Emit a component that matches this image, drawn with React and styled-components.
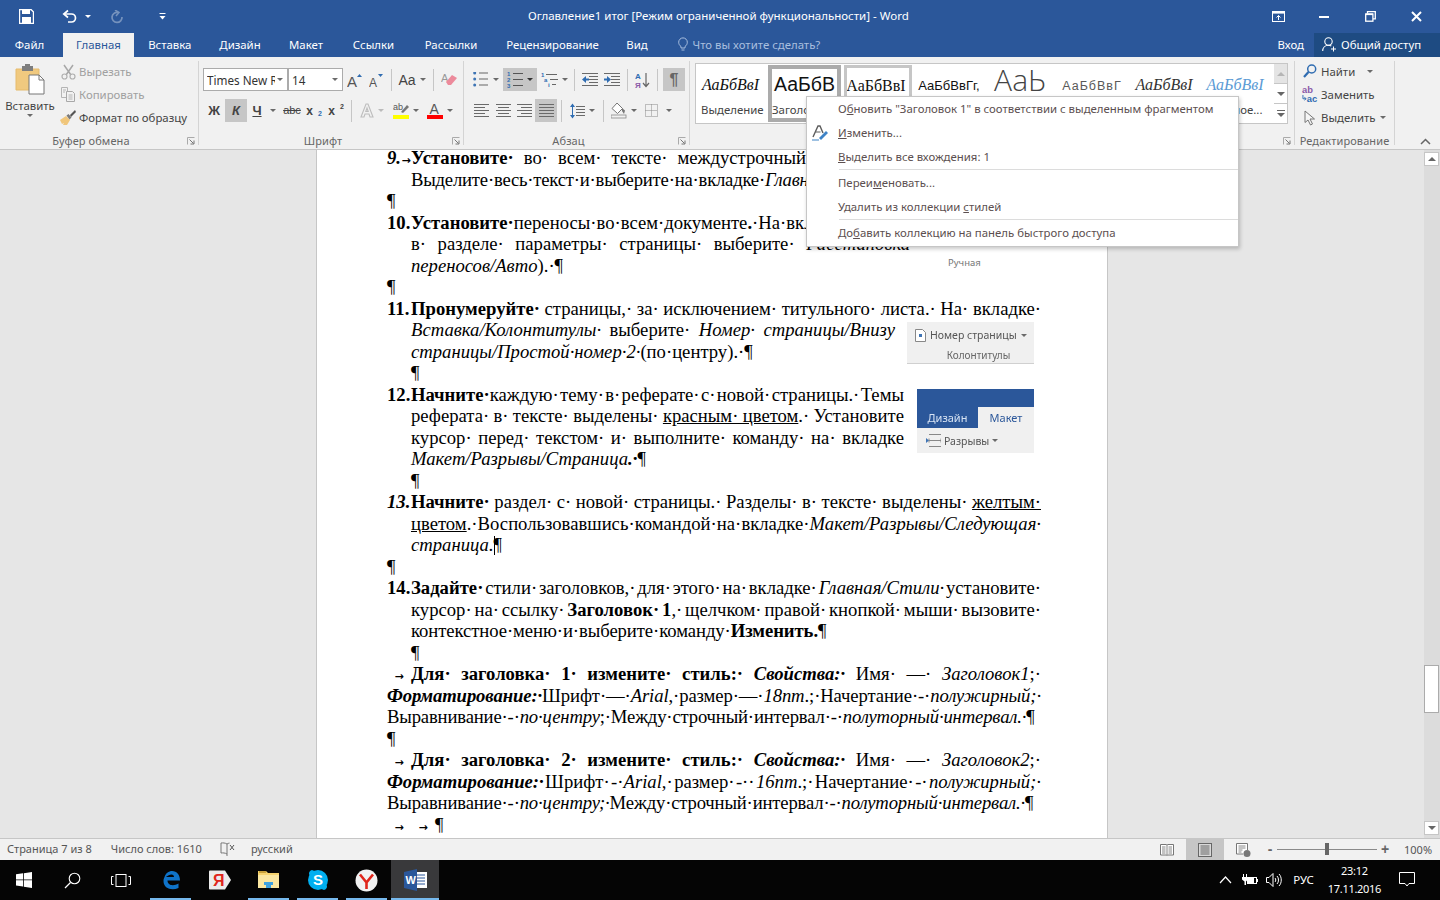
import React from 'react';
import styled, { createGlobalStyle } from 'styled-components';

const ui = `"Noto Sans","Open Sans",sans-serif`;
const serif = `"Liberation Serif","Times New Roman",serif`;

const Global = createGlobalStyle`
  html, body { margin: 0; padding: 0; height: 900px; overflow: hidden; background: #e6e6e6; }
  #root { height: 900px; }
  * { box-sizing: border-box; }
`;

const Shell = styled.div`
  position: relative; width: 1440px; height: 900px; overflow: hidden;
  display: flex; flex-direction: column; font-family: ${ui}; font-size: 11.4px; color: #444;
`;

/* ---------- title bar ---------- */
const TitleBar = styled.div`
  height: 33px; flex: none; background: #2b579a; color: #fff; display: flex; align-items: center;
`;
const Quick = styled.div`
  width: 1255px; height: 33px; flex: none; display: flex; align-items: center; padding-left: 19px; position: relative;
`;
const QuickBtn = styled.div`
  display: flex; align-items: center; width: ${p => p.$w}px; opacity: ${p => p.$dim ? .35 : 1};
`;
const TitleText = styled.div`
  position: absolute; left: 528px; top: 8px; line-height: 16px; white-space: nowrap; font-size: 11.5px; color: #fff;
`;
const WinBtns = styled.div`
  display: flex; align-items: center; flex: 1;
`;
const WinBtn = styled.div`
  width: 46px; height: 33px; display: flex; align-items: center; justify-content: center;
`;
const WhiteCaret = styled.span`
  display: inline-block; width: 0; height: 0; border: 3px solid transparent; border-top: 3px solid #fff; border-bottom: 0;
`;

/* ---------- tabs ---------- */
const TabBar = styled.div`
  height: 24px; flex: none; background: #2b579a; display: flex; align-items: stretch; color: #fff;
`;
const Tab = styled.div`
  width: ${p => p.$w}px; flex: none; padding-bottom: 2px; display: flex; align-items: center; justify-content: center; white-space: nowrap;
  ${p => p.$active && `background:#f1f1f1;color:#2b579a;`}
  ${p => p.$file && `margin-right:4px;`}
`;
const Tell = styled.div`
  display: flex; align-items: center; gap: 5px; margin-left: 16px; padding-bottom: 2px; color: #a9bfdf; flex: 1;
`;
const SignIn = styled.div`
  display: flex; align-items: center; padding: 0 10px 2px 0;
`;
const Share = styled.div`
  width: 126px; background: #1e4b82; display: flex; align-items: center; gap: 4px; padding: 0 0 2px 8px;
`;

/* ---------- ribbon ---------- */
const Ribbon = styled.div`
  height: 93px; flex: none; background: #f1f1f1; border-bottom: 1px solid #c6c6c6; display: flex; padding: 4px 0; position: relative;
`;
const Group = styled.div`
  width: ${p => p.$w}px; flex: none; display: flex; flex-direction: column; position: relative;
  border-right: 1px solid #d4d4d4;
`;
const GroupBody = styled.div`
  flex: 1; display: flex; min-height: 0;
`;
const GroupLabel = styled.div`
  height: 16px; flex: none; text-align: center; line-height: 16px; color: #666; font-size: 11px; letter-spacing: .1px; white-space: nowrap;
  padding-right: ${p => p.$pr || 0}px; margin-bottom: -4px;
`;
const Launcher = styled.div`
  position: absolute; right: 3px; bottom: 0; width: 8px; height: 8px; line-height: 0;
`;
const PasteBtn = styled.div`
  width: 60px; flex: none; display: flex; flex-direction: column; align-items: center; padding-top: 3px;
`;
const PasteLabel = styled.div`
  margin-top: 3px; line-height: 16px; color: #444;
`;
const CmdList = styled.div`
  flex: 1; display: flex; flex-direction: column; margin-top: -1px; padding-left: ${p => p.$l || 0}px;
`;
const Cmd = styled.div`
  height: 23px; display: flex; align-items: center; gap: 3px; white-space: nowrap;
  color: ${p => p.$off ? '#a0a0a0' : '#444'};
`;
const CmdIcon = styled.div`
  width: 16px; height: 16px; flex: none; display: flex; align-items: center; justify-content: center;
`;
const CmdCaret = styled.span`
  margin-left: ${p => p.$l}px; display: flex;
`;
const Rows = styled.div`
  display: flex; flex-direction: column; gap: 8px; padding: 7px 0 0 ${p => p.$l || 0}px;
`;
const Row = styled.div`
  height: 23px; display: flex; align-items: center; padding-left: ${p => p.$l || 0}px;
`;
const Combo = styled.div`
  width: ${p => p.$w}px; height: 23px; background: #fff; border: 1px solid #ababab;
  display: flex; align-items: center; justify-content: space-between; padding: 0 4px 0 3px; color: #333; font-size: 11.7px; white-space: nowrap; overflow: hidden;
`;
const ComboText = styled.span`
  overflow: hidden; width: ${p => p.$w}px;
`;
const Btn = styled.div`
  width: ${p => p.$w || 22}px; height: 23px; flex: none; display: flex; align-items: center;
  justify-content: ${p => p.$start ? 'flex-start' : 'center'}; padding-left: ${p => p.$start || 0}px; gap: ${p => p.$gap || 4}px;
  margin-left: ${p => p.$ml || 0}px; color: #444;
  background: ${p => p.$on ? '#c6c6c6' : 'transparent'};
`;
const Letter = styled.span`
  font-family: "Liberation Sans", sans-serif; font-weight: ${p => p.$bold ? 700 : 400}; font-style: ${p => p.$it ? 'italic' : 'normal'};
  font-size: ${p => p.$size || 13}px; line-height: 1; color: ${p => p.$c || '#444'};
  text-decoration: ${p => p.$under ? 'underline' : p.$strike ? 'line-through' : 'none'};
`;
const Sup = styled.span`
  font-size: 7px; font-weight: 700; font-family: "Liberation Sans", sans-serif; color: ${p => p.$c || '#444'};
  position: relative; top: ${p => p.$t}px; margin-left: 1px;
`;
const Sep = styled.div`
  width: 1px; height: 22px; background: #c6c6c6; flex: none; margin-left: ${p => p.$l}px; margin-right: ${p => p.$r}px;
`;
const Caret = styled.span`
  display: inline-block; width: 0; height: 0; flex: none; border: 3px solid transparent; border-top: 3px solid ${p => p.$c || '#6a6a6a'}; border-bottom: 0;
`;
const Gallery = styled.div`
  margin: 2px 0 0 5px; width: 593px; height: 61px; display: flex; flex: none;
`;
const Cells = styled.div`
  width: 580px; height: 61px; background: #fff; border: 1px solid #c6c6c6; display: flex; padding: 1px 0 0 1px; overflow: hidden;
`;
const Cell = styled.div`
  width: ${p => p.$w}px; height: 57px; flex: none; margin-right: ${p => p.$mr || 0}px; overflow: hidden;
  border: ${p => p.$border || 0}px solid ${p => p.$bc || 'transparent'};
  display: flex; flex-direction: column; align-items: flex-start;
`;
const Preview = styled.div`
  height: ${p => p.$h || 37}px; flex: none; width: 100%; display: flex; align-items: flex-end; justify-content: center; white-space: nowrap; line-height: 1;
  padding: 0 ${p => p.$pr ?? 4}px ${p => p.$pb ?? 9}px 0;
  font-family: ${p => p.$serif ? serif : p.$light ? '"Open Sans","Noto Sans",sans-serif' : '"Liberation Sans",sans-serif'};
  font-size: ${p => p.$size}px; font-style: ${p => p.$it ? 'italic' : 'normal'}; font-weight: ${p => p.$light ? 300 : 400};
  color: ${p => p.$c || '#111'}; letter-spacing: ${p => p.$ls || 0}px;
`;
const CellLabel = styled.div`
  padding-left: ${p => p.$l ?? 4}px; line-height: 16px; color: #444; white-space: nowrap;
`;
const GalleryScroll = styled.div`
  width: 14px; height: 61px; border: 1px solid #c6c6c6; border-left: 0; display: flex; flex-direction: column; flex: none; background: #fff; margin-left: -1px;
`;
const ScrollCell = styled.div`
  flex: 1; display: flex; align-items: center; justify-content: center; position: relative;
  background: ${p => p.$off ? '#e4e4e4' : '#fff'};
  border-top: ${p => p.$top ? '1px solid #c6c6c6' : '0'};
`;
const UpTri = styled.span`
  width: 0; height: 0; border: 4px solid transparent; border-bottom: 4px solid #b5b5b5; border-top: 0;
`;
const Dash = styled.span`
  display: flex; flex-direction: column; align-items: center; gap: 2px;
  &::before { content: ""; width: 8px; height: 1px; background: #666; }
`;
const Collapse = styled.div`
  position: absolute; right: 9px; bottom: 4px; line-height: 0;
`;

/* ---------- document ---------- */
const Doc = styled.div`
  flex: 1; min-height: 0; display: flex; background: #e6e6e6;
`;
const Canvas = styled.div`
  flex: 1; padding-left: 316px; overflow: hidden;
`;
const Page = styled.div`
  position: relative; width: 792px; height: 100%; background: #fff; border-left: 1px solid #c6c6c6; border-right: 1px solid #c6c6c6;
  overflow: hidden; padding-left: 70px; font-family: ${serif}; font-size: 18.67px; color: #000;
`;
const Text = styled.div`
  margin-top: -2.8px;
`;
const Line = styled.div`
  height: 21.5px; line-height: 21.5px; white-space: nowrap;
  margin-left: ${p => p.$in ? 24 : 0}px;
  letter-spacing: ${p => p.$ls || 0}px;
  ${p => p.$end && `width:${p.$end - 387 - (p.$in ? 24 : 0)}px;text-align:justify;text-align-last:justify;word-spacing:-.25em;`}
`;
const B = styled.b`font-weight: 700;`;
const I = styled.i`font-style: italic;`;
const BI = styled.b`font-weight: 700; font-style: italic;`;
const U = styled.span`text-decoration: underline;`;
const Num = styled.span`
  display: inline-block; width: 24px; font-weight: 700; font-style: ${p => p.$it ? 'italic' : 'normal'}; text-align-last: left;
`;
const TabMark = styled.span`
  display: inline-block; width: ${p => p.$w || 24}px; text-align: center; font-size: 11px; font-weight: 700; font-family: "DejaVu Sans", sans-serif; text-align-last: center;
`;
const Cursor = styled.span`
  display: inline-block; width: 1px; height: 19px; background: #000; vertical-align: -4px; margin-right: -1px;
`;
const Figure = styled.div`
  position: absolute; left: ${p => p.$x - 317}px; top: ${p => p.$y - 150}px; width: ${p => p.$w}px; height: ${p => p.$h}px;
  font-family: ${ui}; filter: blur(.3px); background: ${p => p.$bg || 'transparent'};
`;
const FigureRow = styled.div`
  display: flex; align-items: center; gap: 4px; height: 26px; padding-left: ${p => p.$l}px; font-size: 10.5px; color: #555; white-space: nowrap;
`;
const FigureCaption = styled.div`
  text-align: center; font-size: 10px; color: #666; line-height: 14px; border-bottom: 1px solid #d0d0d0; height: 16px; padding-left: 16px;
`;
const MiniTabs = styled.div`
  height: 39px; background: #2b579a; display: flex; align-items: flex-end; font-size: 11px; color: #d7e3f3;
`;
const MiniTab = styled.div`
  height: 21px; display: flex; align-items: center; justify-content: center; width: ${p => p.$w}px;
  ${p => p.$on && 'background:#f0f0f0;color:#2b579a;'}
`;
const FigureBody = styled.div`
  height: 25px; background: #f0f0f0; display: flex; align-items: center; gap: 3px; padding-left: 9px; font-size: 10.5px; color: #555;
`;
const Manual = styled.div`
  position: absolute; left: ${948 - 317}px; top: ${256 - 150}px; font-family: ${ui}; font-size: 9.5px; line-height: 13px; color: #777;
`;
const VScroll = styled.div`
  width: 16px; flex: none; background: #dcdcdc; position: relative; padding: 2px 1px 3px 0; display: flex; flex-direction: column; justify-content: space-between; align-items: center;
`;
const VBtn = styled.div`
  width: 15px; height: 14px; background: #fff; border: 1px solid #c6c6c6; display: flex; align-items: center; justify-content: center;
`;
const VThumb = styled.div`
  position: absolute; left: 0; top: ${665 - 150}px; width: 15px; height: 48px; background: #fff; border: 1px solid #ababab;
`;
const DownTri = styled.span`
  width: 0; height: 0; border: 4px solid transparent; border-top: 4px solid #666; border-bottom: 0;
`;
const UpDark = styled.span`
  width: 0; height: 0; border: 4px solid transparent; border-bottom: 4px solid #666; border-top: 0;
`;

/* ---------- context menu ---------- */
const Menu = styled.div`
  position: absolute; left: 806px; top: 96px; width: 433px; height: 151px; background: #fff; border: 1px solid #c6c6c6;
  box-shadow: 1px 2px 4px rgba(0,0,0,.22); z-index: 5;
`;
const MenuItem = styled.div`
  height: 24px; line-height: 24px; padding-left: 31px; color: #5c4f50; position: relative; white-space: nowrap;
`;
const MenuIcon = styled.span`
  position: absolute; left: 5px; top: 4px; line-height: 0;
`;
const MenuSep = styled.div`
  height: 1px; margin: 0 0 1px 32px; background: #dcdcdc;
`;
const Acc = styled.span`text-decoration: underline;`;

/* ---------- status bar ---------- */
const Status = styled.div`
  height: 22px; flex: none; background: #f1f1f1; border-top: 1px solid #c6c6c6; display: flex; align-items: center; color: #555; font-size: 11px;
`;
const StatusItem = styled.div`
  margin-left: ${p => p.$l}px; padding-bottom: 2px; white-space: nowrap; display: flex; align-items: center;
`;
const StatusSpacer = styled.div`
  flex: 1;
`;
const ViewBtn = styled.div`
  width: ${p => p.$w}px; height: 21px; display: flex; align-items: center; justify-content: center; flex: none;
  background: ${p => p.$on ? '#c6c6c6' : 'transparent'};
`;
const ZoomMark = styled.div`
  width: 16px; text-align: center; flex: none;
`;
const Slider = styled.div`
  width: 100px; height: 1px; background: #8a8a8a; position: relative; flex: none; margin-left: -1px;
`;
const Thumb = styled.div`
  position: absolute; left: 48px; top: -6px; width: 4px; height: 12px; background: #666;
`;
const ZoomPct = styled.div`
  margin-left: 11px; width: 36px; padding-bottom: 1px;
`;

/* ---------- taskbar ---------- */
const Taskbar = styled.div`
  height: 40px; flex: none; background: #050505; display: flex; align-items: stretch; color: #fff;
`;
const TaskBtn = styled.div`
  width: ${p => p.$w || 49}px; flex: none; display: flex; align-items: center; justify-content: center; position: relative;
  background: ${p => p.$on ? '#39393b' : 'transparent'};
  ${p => p.$run && `&::after{content:"";position:absolute;bottom:0;left:${p.$on ? 0 : 4}px;right:${p.$on ? 0 : 4}px;height:2px;background:#76b9ed;}`}
`;
const Tray = styled.div`
  flex: 1; display: flex; align-items: center; justify-content: flex-end;
`;
const TrayItem = styled.div`
  margin-right: ${p => p.$r}px; display: flex; align-items: center; line-height: 0;
`;
const TrayText = styled.div`
  margin-right: ${p => p.$r}px; font-size: ${p => p.$size || 11.4}px; letter-spacing: ${p => p.$ls || 0}px; white-space: nowrap; text-align: center; line-height: 18px;
`;

/* ---------- icons ---------- */
const Lines = ({ x = 0, y = 0, w = 14, n = 4, step = 3, c = '#6a6a6a', alt }) => (
  <>
    {Array.from({ length: n }).map((_, i) => (
      <rect key={i} x={alt === 'r' && i % 2 ? x + 4 : alt === 'c' && i % 2 ? x + 2 : x} y={y + i * step}
        width={alt && i % 2 ? w - 4 : w} height="1" fill={c} />
    ))}
  </>
);
const Launch = () => (
  <svg width="8" height="8" viewBox="0 0 8 8"><path d="M.5 7.5V.5h7" fill="none" stroke="#aaa" /><path d="M2.5 2.5l4 4M7 3.5V7H3.5" fill="none" stroke="#777" /></svg>
);
const SaveIcon = () => (
  <svg width="15" height="15" viewBox="0 0 15 15"><path d="M.5.5h11.5l2.5 2.5v11.5H.5z" fill="none" stroke="#fff" strokeWidth="1.4" /><rect x="3" y="1" width="8" height="4" fill="#fff" /><rect x="3" y="8" width="9" height="6" fill="#fff" /></svg>
);
const UndoIcon = () => (
  <svg width="16" height="15" viewBox="0 0 16 15"><path d="M6 1.5L1.8 5 6 8.5" fill="none" stroke="#fff" strokeWidth="1.7" /><path d="M2 5h7.5a4 4 0 0 1 0 8H6" fill="none" stroke="#fff" strokeWidth="1.7" /></svg>
);
const RedoIcon = () => (
  <svg width="14" height="14" viewBox="0 0 14 14"><path d="M8 2.5A5 5 0 1 0 12 7" fill="none" stroke="#fff" strokeWidth="1.7" /><path d="M5 0l4 2.5L6 6" fill="none" stroke="#fff" strokeWidth="1.5" /></svg>
);
const Customize = () => (
  <svg width="7" height="7" viewBox="0 0 7 7"><rect width="6" height="1" x=".5" fill="#fff" /><path d="M.5 3h6L3.5 6.5z" fill="#fff" /></svg>
);
const DisplayIcon = () => (
  <svg width="13" height="11" viewBox="0 0 13 11"><rect x=".5" y=".5" width="12" height="10" fill="none" stroke="#fff" /><rect x="1" y="1" width="11" height="1.6" fill="#fff" /><path d="M6.5 9V4.5M4.5 6.5l2-2 2 2" fill="none" stroke="#fff" /></svg>
);
const MinIcon = () => <svg width="10" height="2" viewBox="0 0 10 2"><rect width="10" height="2" fill="#fff" /></svg>;
const RestoreIcon = () => (
  <svg width="11" height="11" viewBox="0 0 11 11"><path d="M2.5 2.5V.7h7.8v7.1H8" fill="none" stroke="#fff" strokeWidth="1.3" /><rect x=".7" y="3" width="7.2" height="7.2" fill="none" stroke="#fff" strokeWidth="1.3" /><rect x=".7" y="2.5" width="7.2" height="1.6" fill="#fff" /></svg>
);
const CloseIcon = () => (
  <svg width="11" height="11" viewBox="0 0 11 11"><path d="M1 1l9 9M10 1l-9 9" stroke="#fff" strokeWidth="2" /></svg>
);
const Bulb = () => (
  <svg width="10" height="14" viewBox="0 0 10 14"><path d="M3 9.5C1.5 8.5.7 7 .7 5.2a4.3 4.3 0 0 1 8.6 0C9.3 7 8.5 8.5 7 9.5V11H3z" fill="none" stroke="#a9bfdf" /><rect x="3.5" y="12.5" width="3" height="1" fill="#a9bfdf" /></svg>
);
const ShareIcon = () => (
  <svg width="15" height="15" viewBox="0 0 15 15"><circle cx="6.5" cy="4.5" r="3.7" fill="none" stroke="#fff" strokeWidth="1.1" /><path d="M.7 14c0-3.500 2.500-5.800 5.800-5.800 1 0 2 .3 2.800.8" fill="none" stroke="#fff" strokeWidth="1.1" /><path d="M11.500 9.500v5M9 12h5" stroke="#fff" /></svg>
);
const PasteIcon = () => (
  <svg width="30" height="31" viewBox="0 0 30 31">
    <path d="M1 5h23v21H1z" fill="#f0c97f" stroke="#e6bb6c" />
    <rect x="7" y="2" width="11" height="5" fill="#7e7e7e" /><rect x="10" y="0" width="5" height="3" fill="#7e7e7e" />
    <path d="M14 11h10l5 5v14H14z" fill="#fff" stroke="#777" /><path d="M24 11v5h5" fill="none" stroke="#777" />
  </svg>
);
const CutIcon = () => (
  <svg width="15" height="16" viewBox="0 0 15 16"><path d="M3 1l7 10M12 1L5 11" stroke="#a8a8a8" strokeWidth="1.5" /><circle cx="3.5" cy="12.5" r="2.5" fill="none" stroke="#b0b0b0" strokeWidth="1.2" /><circle cx="11.5" cy="12.5" r="2.5" fill="none" stroke="#b0b0b0" strokeWidth="1.2" /></svg>
);
const CopyIcon = () => (
  <svg width="15" height="15" viewBox="0 0 15 15"><path d="M.5.5h6v10h-6z" fill="none" stroke="#b4b4b4" /><path d="M5.5 4.5h6l2 2v8h-8z" fill="#f1f1f1" stroke="#a8a8a8" /><path d="M7.5 8h4M7.5 10h4M7.5 12h4M2 3h3M2 5h2" stroke="#b4b4b4" /></svg>
);
const BrushIcon = () => (
  <svg width="16" height="15" viewBox="0 0 16 15"><path d="M0 10l6-4 4 4-3 5H3l1-2-2 1z" fill="#f0c67b" /><path d="M6.5 5.5l3 4 2-2-3-3.500z" fill="#7a7a7a" /><path d="M10 5l5-5 1 2-5 5z" fill="#555" /></svg>
);
const SizeA = ({ big }) => (
  <svg width="16" height="16" viewBox="0 0 16 16">
    <text x="0" y="15" fontSize={big ? 15 : 12} fontFamily="Liberation Sans" fill="#555">A</text>
    <path d={big ? 'M10 5l2.5-3L15 5z' : 'M9 2h5l-2.5 3z'} fill="#2f6cb1" />
  </svg>
);
const Eraser = () => (
  <svg width="16" height="16" viewBox="0 0 16 16"><text x="0" y="10" fontSize="11" fontFamily="Liberation Sans" fill="#999">A</text><path d="M5 10l6-7 5 3-6 7H7z" fill="#ec8a9b" /></svg>
);
const OutlineA = () => (
  <svg width="14" height="15" viewBox="0 0 14 15"><path d="M1 14L6 1h2l5 13h-3l-1-3H5l-1 3zM5.8 8.5h2.4L7 5z" fill="#f1f1f1" stroke="#bdbdbd" strokeWidth="1.1" /></svg>
);
const Highlight = () => (
  <svg width="16" height="17" viewBox="0 0 16 17"><text x="0" y="8" fontSize="9" fontFamily="Liberation Sans" fill="#555">ab</text><path d="M8 10l6-7 2 2-6 6z" fill="#777" /><rect x="0" y="13" width="16" height="4" fill="#ffff00" /></svg>
);
const FontColor = () => (
  <svg width="16" height="17" viewBox="0 0 16 17"><text x="2.5" y="12" fontSize="14" fontFamily="Liberation Sans" fill="#555">A</text><rect x="0" y="13" width="16" height="4" fill="#ff0000" /></svg>
);
const Bullets = () => (
  <svg width="15" height="15" viewBox="0 0 15 15">{[1, 7, 13].map(y => <g key={y}><circle cx="1.7" cy={y} r="1.5" fill="#3d74b4" /><rect x="6" y={y - .5} width="9" height="1" fill="#666" /></g>)}</svg>
);
const Numbered = () => (
  <svg width="16" height="16" viewBox="0 0 16 16">{[['1', 4], ['2', 10], ['3', 16]].map(([t, y]) => <g key={t}><text x="0" y={y} fontSize="6" fontWeight="700" fontFamily="Liberation Sans" fill="#2f6cb1">{t}</text><rect x="6" y={y - 3} width="10" height="1" fill="#555" /></g>)}</svg>
);
const Multi = () => (
  <svg width="17" height="16" viewBox="0 0 17 16"><text x="0" y="5" fontSize="6" fontWeight="700" fontFamily="Liberation Sans" fill="#2f6cb1">1</text><rect x="5" y="2" width="11" height="1" fill="#666" /><text x="3" y="10" fontSize="6" fontWeight="700" fontFamily="Liberation Sans" fill="#2f6cb1">a</text><rect x="9" y="7" width="8" height="1" fill="#666" /><text x="7" y="15" fontSize="6" fontWeight="700" fontFamily="Liberation Sans" fill="#2f6cb1">i</text><rect x="11" y="12" width="4" height="1" fill="#666" /></svg>
);
const Indent = ({ inc }) => (
  <svg width="16" height="14" viewBox="0 0 16 14"><rect width="16" height="1" fill="#6a6a6a" /><rect x="7" y="3" width="9" height="1" fill="#6a6a6a" /><rect x="7" y="6" width="9" height="1" fill="#6a6a6a" /><rect x="7" y="9" width="9" height="1" fill="#6a6a6a" /><rect y="12" width="16" height="1" fill="#6a6a6a" /><path d={inc ? 'M0 5.5h3V3l4 3.5L3 10V7.5H0z' : 'M7 5.5H4V3L0 6.5 4 10V7.5h3z'} fill="#2f6cb1" /></svg>
);
const Sort = () => (
  <svg width="16" height="16" viewBox="0 0 16 16"><text x="0" y="7" fontSize="8" fontWeight="700" fontFamily="Liberation Sans" fill="#2f6cb1">А</text><text x="0" y="15.5" fontSize="8" fontWeight="700" fontFamily="Liberation Sans" fill="#8a5aa8">Я</text><path d="M11 1v13M8 11l3 3.5 3-3.500" fill="none" stroke="#666" strokeWidth="1.2" /></svg>
);
const Align = ({ alt }) => (
  <svg width="15" height="13" viewBox="0 0 15 13"><Lines w={15} n={5} alt={alt} /></svg>
);
const Spacing = () => (
  <svg width="15" height="16" viewBox="0 0 15 16"><path d="M2.5 1v14" stroke="#2f6cb1" /><path d="M0 4l2.5-3.500L5 4zM0 12l2.5 3.5L5 12z" fill="#2f6cb1" /><Lines x={6} y={3} w={9} n={4} /></svg>
);
const Shading = () => (
  <svg width="16" height="17" viewBox="0 0 16 17"><path d="M6 1l5.5 5.5-5 5L1 6.5z" fill="#fff" stroke="#777" /><path d="M11 6l3 2.5-1 3.5-2-3z" fill="#777" /><rect y="13" width="15" height="3" fill="#f1f1f1" stroke="#888" strokeWidth=".8" /></svg>
);
const Borders = () => (
  <svg width="13" height="13" viewBox="0 0 13 13"><rect x=".5" y=".5" width="12" height="12" fill="none" stroke="#888" strokeDasharray="1 1" /><path d="M6.5 .5v12M.5 6.5h12" stroke="#888" strokeDasharray="1 1" /></svg>
);
const FindIcon = () => (
  <svg width="14" height="15" viewBox="0 0 14 15"><circle cx="8.7" cy="5" r="4" fill="none" stroke="#2f6cb1" strokeWidth="1.5" /><path d="M5.5 8L1 13" stroke="#2f6cb1" strokeWidth="2.2" /></svg>
);
const ReplaceIcon = () => (
  <svg width="17" height="17" viewBox="0 0 17 17"><text x="0" y="7" fontSize="10" fontWeight="700" fontFamily="Liberation Sans" fill="#8a5aa8">ab</text><text x="5" y="16" fontSize="10" fontWeight="700" fontFamily="Liberation Sans" fill="#2f6cb1">ac</text><path d="M1 9v4h3M2.5 11.5L4.5 13l-2 1.500" fill="none" stroke="#2f6cb1" /></svg>
);
const SelectIcon = () => (
  <svg width="13" height="16" viewBox="0 0 13 16"><path d="M1 1v11.5l3-2.500 2.5 5 2-1L6 9h4.500z" fill="#f6f6f6" stroke="#777" /></svg>
);
const ChevUp = () => (
  <svg width="11" height="7" viewBox="0 0 11 7"><path d="M1 6l4.5-4.500L10 6" fill="none" stroke="#666" strokeWidth="1.5" /></svg>
);
const StyleEdit = () => (
  <svg width="17" height="16" viewBox="0 0 17 16"><path d="M1 12L6 1h2l3 7" fill="none" stroke="#5d5d5d" strokeWidth="1.4" /><path d="M3.5 7h5" stroke="#5d5d5d" /><path d="M7 13l7-7 2 2-7 7z" fill="#3f83c6" /><rect x="0" y="14.5" width="7" height="1" fill="#3f83c6" /></svg>
);
const PageNo = () => (
  <svg width="11" height="13" viewBox="0 0 11 13"><path d="M.5.5h7l3 3v9H.5z" fill="#fff" stroke="#888" /><rect x="4" y="5" width="3" height="3" fill="#3f74b4" /></svg>
);
const BreakIcon = () => (
  <svg width="15" height="13" viewBox="0 0 15 13"><path d="M3 .5h12M3 12.5h12M3 4.5v4M15 4.5v4M3 6.5h12" fill="none" stroke="#888" /><path d="M0 4l3 2.5L0 9z" fill="#3f74b4" /></svg>
);
const BookX = () => (
  <svg width="15" height="14" viewBox="0 0 15 14"><path d="M7 2C5 .8 3 .8 1 1v10c2-.2 4-.2 6 1V2zM7 2c.8-.5 1.5-.8 2.5-.9" fill="none" stroke="#777" /><path d="M7 12v2" stroke="#777" /><path d="M10 3l4 5M14 3l-4 5" stroke="#555" /></svg>
);
const ReadIcon = () => (
  <svg width="14" height="14" viewBox="0 0 14 14"><path d="M.5 1.5h5.700L7 2l.8-.5h5.700v10.500H7.800L7 12.500 6.200 12H.5z" fill="#fff" stroke="#777" /><path d="M7 2v10M2 4h3.500M2 6h3.500M2 8h3.500M2 10h3.500M8.500 4H12M8.500 6H12M8.500 8H12M8.500 10H12" stroke="#888" /></svg>
);
const PrintView = () => (
  <svg width="14" height="14" viewBox="0 0 14 14"><rect x=".5" y=".5" width="13" height="13" fill="#d8d8d8" stroke="#666" /><path d="M2.5 3h9M2.5 5h9M2.5 7h9M2.5 9h9M2.5 11h9" stroke="#666" /></svg>
);
const WebView = () => (
  <svg width="15" height="14" viewBox="0 0 15 14"><path d="M11.5 7V.5H.5v10.500H7" fill="#fff" stroke="#777" /><path d="M2.5 3h7M2.5 5h7M2.5 7h4M2.5 9h3" stroke="#888" /><circle cx="11" cy="10.5" r="3.5" fill="#777" /></svg>
);
const WinLogo = () => (
  <svg width="16" height="16" viewBox="0 0 16 16"><path d="M0 2.3L7 1.3V7.5H0zM7.8 1.2L16 0v7.5H7.8zM0 8.3h7v6.300l-7-1zM7.8 8.3H16V16l-8.200-1.200z" fill="#fff" /></svg>
);
const SearchIcon = () => (
  <svg width="17" height="17" viewBox="0 0 17 17"><circle cx="10.5" cy="6.5" r="5.3" fill="none" stroke="#fff" strokeWidth="1.1" /><path d="M6.5 10.5L1 16" stroke="#fff" strokeWidth="1.3" /></svg>
);
const TaskView = () => (
  <svg width="20" height="13" viewBox="0 0 20 13"><rect x="5" y=".5" width="10" height="12" fill="none" stroke="#fff" /><path d="M2.5 2.5H.5v8h2M17.5 2.5h2v8h-2" fill="none" stroke="#fff" /></svg>
);
const Edge = () => (
  <svg width="20" height="20" viewBox="0 0 20 20"><path d="M3 9C4 3 8 1 11 1c5 0 8 4 8 9.500H6.500c0 5 6 6 11 3v4.500c-7 3-15 .5-15-7 0-4 3-7 6-7.500-2 1-3 2-3.500 3.500h8C13 4 9 3 3 9z" fill="#0f73c9" /></svg>
);
const Yandex = () => (
  <svg width="24" height="24" viewBox="0 0 24 24"><path d="M2 2.5h15l6 9.5-6 9.500H2c-.5 0-1-.5-1-1V3.500c0-.5.5-1 1-1z" fill="#ececec" /><text x="5" y="18" fontSize="16" fontWeight="700" fontFamily="Liberation Sans" fill="#e0261b">Я</text></svg>
);
const Folder = () => (
  <svg width="22" height="20" viewBox="0 0 22 20"><path d="M0 1h8l2 2h11v15H0z" fill="#f6d36e" /><path d="M0 5h21v13H0z" fill="#fbe7a1" /><rect x="1" y="1" width="7" height="2" fill="#c9a13a" /><path d="M6 12h9v3h-2v3H8v-3H6z" fill="#3fa2e0" /></svg>
);
const Skype = () => (
  <svg width="22" height="22" viewBox="0 0 22 22"><circle cx="11" cy="11" r="10" fill="#00aff0" /><path d="M2 5a4 4 0 0 1 3-4l5 2-6 6zM20 17a4 4 0 0 1-3 4l-5-2 6-6z" fill="#00aff0" /><text x="11" y="16" fontSize="15" fontWeight="700" textAnchor="middle" fontFamily="Liberation Sans" fill="#fff">S</text></svg>
);
const YBrowser = () => (
  <svg width="23" height="23" viewBox="0 0 23 23"><circle cx="11.5" cy="11.5" r="11" fill="#f2f2f2" /><path d="M5 5.5l6.5 8M18 5.5l-6.500 8V20" fill="none" stroke="#e0261b" strokeWidth="2.6" /></svg>
);
const WordIcon = () => (
  <svg width="23" height="22" viewBox="0 0 23 22"><rect x="10" y="3" width="13" height="16" fill="#fff" /><path d="M12 6h9M12 9h9M12 12h9M12 15h9" stroke="#2b579a" /><path d="M0 3l13-3v22L0 19z" fill="#2b579a" /><text x="1.5" y="15" fontSize="11" fontWeight="700" fontFamily="Liberation Sans" fill="#fff">W</text></svg>
);
const ChevTray = () => (
  <svg width="13" height="8" viewBox="0 0 13 8"><path d="M1 7l5.5-6L12 7" fill="none" stroke="#fff" strokeWidth="1.2" /></svg>
);
const Battery = () => (
  <svg width="16" height="12" viewBox="0 0 16 12"><path d="M1.5 0v3M4.5 0v3" stroke="#fff" /><path d="M0 3h6v2.500L4 7.500V11H2.500V7.500L0 5.500z" fill="#fff" /><rect x="5.5" y="3.5" width="9" height="6" fill="none" stroke="#fff" /><rect x="6" y="4" width="6" height="5" fill="#fff" /><rect x="15" y="5" width="1" height="3" fill="#fff" /></svg>
);
const Volume = () => (
  <svg width="16" height="14" viewBox="0 0 16 14"><path d="M.5 4.5h2.500l4-4v13l-4-4H.5z" fill="none" stroke="#fff" /><path d="M9 5c1 1 1 3 0 4M11 3c2 2 2 6 0 8M13 1c3 3 3 9 0 12" fill="none" stroke="#fff" /></svg>
);
const Action = () => (
  <svg width="16" height="16" viewBox="0 0 16 16"><path d="M.5.5h15v11H10L8 14 6 11.500H.5z" fill="none" stroke="#fff" /></svg>
);

export default function App() {
  return (
    <Shell>
      <Global />
      <TitleBar>
        <Quick>
          <QuickBtn $w={43}><SaveIcon /></QuickBtn>
          <QuickBtn $w={23}><UndoIcon /></QuickBtn>
          <QuickBtn $w={25}><WhiteCaret /></QuickBtn>
          <QuickBtn $w={49} $dim><RedoIcon /></QuickBtn>
          <QuickBtn $w={10}><Customize /></QuickBtn>
          <TitleText>Оглавление1 итог [Режим ограниченной функциональности] - Word</TitleText>
        </Quick>
        <WinBtns>
          <WinBtn><DisplayIcon /></WinBtn>
          <WinBtn><MinIcon /></WinBtn>
          <WinBtn><RestoreIcon /></WinBtn>
          <WinBtn><CloseIcon /></WinBtn>
        </WinBtns>
      </TitleBar>

      <TabBar>
        <Tab $file $w={59}>Файл</Tab>
        <Tab $active $w={71}>Главная</Tab>
        <Tab $w={71.5}>Вставка</Tab>
        <Tab $w={69}>Дизайн</Tab>
        <Tab $w={63}>Макет</Tab>
        <Tab $w={72}>Ссылки</Tab>
        <Tab $w={83}>Рассылки</Tab>
        <Tab $w={120}>Рецензирование</Tab>
        <Tab $w={49}>Вид</Tab>
        <Tell><Bulb />Что вы хотите сделать?</Tell>
        <SignIn>Вход</SignIn>
        <Share><ShareIcon />Общий доступ</Share>
      </TabBar>

      <Ribbon>
        <Group $w={199}>
          <GroupBody>
            <PasteBtn>
              <PasteIcon />
              <PasteLabel>Вставить</PasteLabel>
              <Caret />
            </PasteBtn>
            <CmdList>
              <Cmd $off><CmdIcon><CutIcon /></CmdIcon>Вырезать</Cmd>
              <Cmd $off><CmdIcon><CopyIcon /></CmdIcon>Копировать</Cmd>
              <Cmd><CmdIcon><BrushIcon /></CmdIcon>Формат по образцу</Cmd>
            </CmdList>
          </GroupBody>
          <GroupLabel $pr={16}>Буфер обмена</GroupLabel>
          <Launcher><Launch /></Launcher>
        </Group>

        <Group $w={265}>
          <GroupBody>
            <Rows $l={4}>
              <Row>
                <Combo $w={85}><ComboText $w={68}>Times New Roman</ComboText><Caret /></Combo>
                <Combo $w={55}>14<Caret /></Combo>
                <Btn $ml={1}><SizeA big /></Btn>
                <Btn><SizeA /></Btn>
                <Sep $l={3} $r={3} />
                <Btn $w={34}><Letter $size={14}>Aa</Letter><Caret /></Btn>
                <Sep $l={4} $r={3} />
                <Btn $w={24}><Eraser /></Btn>
              </Row>
              <Row>
                <Btn><Letter $bold $size={13}>Ж</Letter></Btn>
                <Btn $on><Letter $bold $it $size={13}>К</Letter></Btn>
                <Btn $w={34} $gap={8}><Letter $bold $under $size={13}>Ч</Letter><Caret /></Btn>
                <Btn><Letter $strike $size={11}>abc</Letter></Btn>
                <Btn><Letter $bold $size={12}>x</Letter><Sup $t={3} $c="#2f6cb1">2</Sup></Btn>
                <Btn><Letter $bold $size={12}>x</Letter><Sup $t={-4} $c="#444">2</Sup></Btn>
                <Sep $l={4} $r={3} />
                <Btn $w={34}><OutlineA /><Caret $c="#bbb" /></Btn>
                <Btn $w={34}><Highlight /><Caret /></Btn>
                <Btn $w={34}><FontColor /><Caret /></Btn>
              </Row>
            </Rows>
          </GroupBody>
          <GroupLabel $pr={16}>Шрифт</GroupLabel>
          <Launcher><Launch /></Launcher>
        </Group>

        <Group $w={226}>
          <GroupBody>
            <Rows $l={2}>
              <Row>
                <Btn $w={35} $start={7} $gap={5}><Bullets /><Caret /></Btn>
                <Btn $w={34} $ml={2} $on><Numbered /><Caret $c="#333" /></Btn>
                <Btn $w={30} $ml={2}><Multi /><Caret /></Btn>
                <Sep $l={5} $r={4} />
                <Btn><Indent /></Btn>
                <Btn><Indent inc /></Btn>
                <Sep $l={4} $r={4} />
                <Btn><Sort /></Btn>
                <Sep $l={3} $r={5} />
                <Btn $on><Letter $size={16} $bold $c="#666">¶</Letter></Btn>
              </Row>
              <Row $l={4}>
                <Btn><Align alt="l" /></Btn>
                <Btn><Align alt="c" /></Btn>
                <Btn $w={21}><Align alt="r" /></Btn>
                <Btn $on><Align /></Btn>
                <Sep $l={4} $r={4} />
                <Btn $w={32}><Spacing /><Caret /></Btn>
                <Sep $l={5} $r={4} />
                <Btn $w={32}><Shading /><Caret /></Btn>
                <Btn $w={33} $ml={2} $gap={8}><Borders /><Caret /></Btn>
              </Row>
            </Rows>
          </GroupBody>
          <GroupLabel $pr={16}>Абзац</GroupLabel>
          <Launcher><Launch /></Launcher>
        </Group>

        <Group $w={605}>
          <GroupBody>
            <Gallery>
              <Cells>
                <Cell $w={71}><Preview $serif $it $size={16}>АаБбВвІ</Preview><CellLabel>Выделение</CellLabel></Cell>
                <Cell $w={73} $border={4} $bc="#ababab" $mr={3}><Preview $size={19.5} $pr={0} $pb={8} $h={33}>АаБбВ</Preview><CellLabel $l={0}>Заголовок 1</CellLabel></Cell>
                <Cell $w={68} $border={3} $bc="#c6c6c6" $mr={4}><Preview $serif $size={16} $pb={8} $h={34}>АаБбВвІ</Preview><CellLabel>Заголовок 2</CellLabel></Cell>
                <Cell $w={70}><Preview $size={13} $pb={10}>АаБбВвГг,</Preview><CellLabel>Обычный</CellLabel></Cell>
                <Cell $w={72}><Preview $size={30} $pb={7} $light $c="#444">АаЬ</Preview><CellLabel>Название</CellLabel></Cell>
                <Cell $w={72}><Preview $size={12.5} $pb={10} $ls={1} $c="#595959">АаБбВвГ</Preview><CellLabel>Подзаголовок</CellLabel></Cell>
                <Cell $w={72}><Preview $serif $it $size={16} $c="#333">АаБбВвІ</Preview><CellLabel>Слабое</CellLabel></Cell>
                <Cell $w={70}><Preview $serif $it $size={16} $c="#5b9bd5">АаБбВвІ</Preview><CellLabel>Сильное...</CellLabel></Cell>
              </Cells>
              <GalleryScroll>
                <ScrollCell $off><UpTri /></ScrollCell>
                <ScrollCell $top><DownTri /></ScrollCell>
                <ScrollCell $top><Dash><DownTri /></Dash></ScrollCell>
              </GalleryScroll>
            </Gallery>
          </GroupBody>
          <Launcher><Launch /></Launcher>
        </Group>

        <Group $w={100}>
          <GroupBody>
            <CmdList $l={7}>
              <Cmd><CmdIcon><FindIcon /></CmdIcon>Найти<CmdCaret $l={9}><Caret /></CmdCaret></Cmd>
              <Cmd><CmdIcon><ReplaceIcon /></CmdIcon>Заменить</Cmd>
              <Cmd><CmdIcon><SelectIcon /></CmdIcon>Выделить<CmdCaret $l={1}><Caret /></CmdCaret></Cmd>
            </CmdList>
          </GroupBody>
          <GroupLabel>Редактирование</GroupLabel>
        </Group>
        <Collapse><ChevUp /></Collapse>
      </Ribbon>

      <Doc>
        <Canvas>
          <Page>
            <Text>
              <Line $end={806}><BI>9.</BI><TabMark $w={10}>→</TabMark><B>Установите·</B> во· всем· тексте· междустрочный</Line>
              <Line $in $ls={-.2}>Выделите·весь·текст·и·выберите·на·вкладке·<I>Главная</I></Line>
              <Line>¶</Line>
              <Line><Num>10.</Num><B>Установите·</B>переносы·во·всем·документе<B>.</B>·На·вкладке</Line>
              <Line $in $end={910}>в· разделе· параметры· страницы· выберите· <I>Расстановка</I></Line>
              <Line $in><I>переносов/Авто</I>).·¶</Line>
              <Line>¶</Line>
              <Line $end={1041}><Num>11.</Num><B>Пронумеруйте·</B> страницы,· за· исключением· титульного· листа.· На· вкладке·</Line>
              <Line $in $end={895}><I>Вставка/Колонтитулы·</I> выберите· <I>Номер· страницы/Внизу</I></Line>
              <Line $in><I>страницы/Простой·номер·2·</I>(по·центру).·¶</Line>
              <Line $in>¶</Line>
              <Line $end={904}><Num>12.</Num><B>Начните·</B>каждую· тему· в· реферате· с· новой· страницы.· Темы</Line>
              <Line $in $end={904}>реферата· в· тексте· выделены· <U>красным· цветом</U>.· Установите</Line>
              <Line $in $end={904}>курсор· перед· текстом· и· выполните· команду· на· вкладке</Line>
              <Line $in><I>Макет/Разрывы/Страница</I><BI>.·</BI>¶</Line>
              <Line $in>¶</Line>
              <Line $end={1041}><Num $it>13.</Num><B>Начните·</B> раздел· с· новой· страницы.· Разделы· в· тексте· выделены· <U>желтым·</U></Line>
              <Line $in $end={1041}><U>цветом</U>.· Воспользовавшись· командой· на· вкладке· <I>Макет/Разрывы/Следующая·</I></Line>
              <Line $in><I>страница.</I><Cursor />¶</Line>
              <Line>¶</Line>
              <Line $end={1041}><Num>14.</Num><B>Задайте·</B> стили· заголовков,· для· этого· на· вкладке· <I>Главная/Стили·</I> установите·</Line>
              <Line $in $end={1041}>курсор· на· ссылку· <B>Заголовок· 1</B>,· щелчком· правой· кнопкой· мыши· вызовите·</Line>
              <Line $in $ls={-.07}>контекстное·меню·и·выберите·команду·<B>Изменить.</B>¶</Line>
              <Line $in>¶</Line>
              <Line $end={1041}><TabMark>→</TabMark><B>Для· заголовка· 1· измените· стиль:·</B> <BI>Свойства:·</BI> Имя· —· <I>Заголовок1</I>;·</Line>
              <Line $end={1041} $ls={-.1}><BI>Форматирование:·</BI> Шрифт· —· <I>Arial</I>,· размер· —· <I>18пт</I>.;· Начертание· -· <I>полужирный;·</I></Line>
              <Line $ls={-.16}>Выравнивание·-·<I>по·центру</I>;·Между·строчный·интервал·-·<I>полуторный·интервал.·</I>¶</Line>
              <Line>¶</Line>
              <Line $end={1041}><TabMark>→</TabMark><B>Для· заголовка· 2· измените· стиль:·</B> <BI>Свойства:·</BI> Имя· —· <I>Заголовок2</I>;·</Line>
              <Line $end={1041}><BI>Форматирование:·</BI> Шрифт· -·<I>Arial</I>,· размер· -·· <I>16пт</I>.;· Начертание· -· <I>полужирный;·</I></Line>
              <Line $ls={-.16}>Выравнивание·-·<I>по·центру;·</I>Между·строчный·интервал·-·<I>полуторный·интервал.·</I>¶</Line>
              <Line><TabMark>→</TabMark><TabMark>→</TabMark>¶</Line>
            </Text>
            <Manual>Ручная</Manual>
            <Figure $x={907} $y={322} $w={127} $h={42} $bg="#f0f0f0">
              <FigureRow $l={8}><PageNo />Номер страницы<Caret /></FigureRow>
              <FigureCaption>Колонтитулы</FigureCaption>
            </Figure>
            <Figure $x={917} $y={389} $w={117} $h={64}>
              <MiniTabs>
                <MiniTab $w={61}>Дизайн</MiniTab>
                <MiniTab $w={56} $on>Макет</MiniTab>
              </MiniTabs>
              <FigureBody><BreakIcon />Разрывы<Caret /></FigureBody>
            </Figure>
          </Page>
        </Canvas>
        <VScroll>
          <VBtn><UpDark /></VBtn>
          <VThumb />
          <VBtn><DownTri /></VBtn>
        </VScroll>
      </Doc>

      <Status>
        <StatusItem $l={7}>Страница 7 из 8</StatusItem>
        <StatusItem $l={19}>Число слов: 1610</StatusItem>
        <StatusItem $l={18}><BookX /></StatusItem>
        <StatusItem $l={16}>русский</StatusItem>
        <StatusSpacer />
        <ViewBtn $w={38}><ReadIcon /></ViewBtn>
        <ViewBtn $w={38} $on><PrintView /></ViewBtn>
        <ViewBtn $w={38}><WebView /></ViewBtn>
        <ZoomMark><Letter $bold $size={14} $c="#666">-</Letter></ZoomMark>
        <Slider><Thumb /></Slider>
        <ZoomMark><Letter $bold $size={14} $c="#666">+</Letter></ZoomMark>
        <ZoomPct>100%</ZoomPct>
      </Status>

      <Taskbar>
        <TaskBtn $w={48}><WinLogo /></TaskBtn>
        <TaskBtn $w={48}><SearchIcon /></TaskBtn>
        <TaskBtn $w={50}><TaskView /></TaskBtn>
        <TaskBtn $run><Edge /></TaskBtn>
        <TaskBtn><Yandex /></TaskBtn>
        <TaskBtn $run><Folder /></TaskBtn>
        <TaskBtn $run><Skype /></TaskBtn>
        <TaskBtn $run><YBrowser /></TaskBtn>
        <TaskBtn $run $on $w={48}><WordIcon /></TaskBtn>
        <Tray>
          <TrayItem $r={10}><ChevTray /></TrayItem>
          <TrayItem $r={8}><Battery /></TrayItem>
          <TrayItem $r={11}><Volume /></TrayItem>
          <TrayText $r={14}>РУС</TrayText>
          <TrayText $r={18} $size={11} $ls={-.3}>23:12<br />17.11.2016</TrayText>
          <TrayItem $r={25}><Action /></TrayItem>
        </Tray>
      </Taskbar>

      <Menu>
        <MenuItem>О<Acc>б</Acc>новить "Заголовок 1" в соответствии с выделенным фрагментом</MenuItem>
        <MenuItem><MenuIcon><StyleEdit /></MenuIcon><Acc>И</Acc>зменить...</MenuItem>
        <MenuItem><Acc>В</Acc>ыделить все вхождения: 1</MenuItem>
        <MenuSep />
        <MenuItem>Переи<Acc>м</Acc>еновать...</MenuItem>
        <MenuItem>Удалить из коллекции <Acc>с</Acc>тилей</MenuItem>
        <MenuSep />
        <MenuItem>До<Acc>б</Acc>авить коллекцию на панель быстрого доступа</MenuItem>
      </Menu>
    </Shell>
  );
}
